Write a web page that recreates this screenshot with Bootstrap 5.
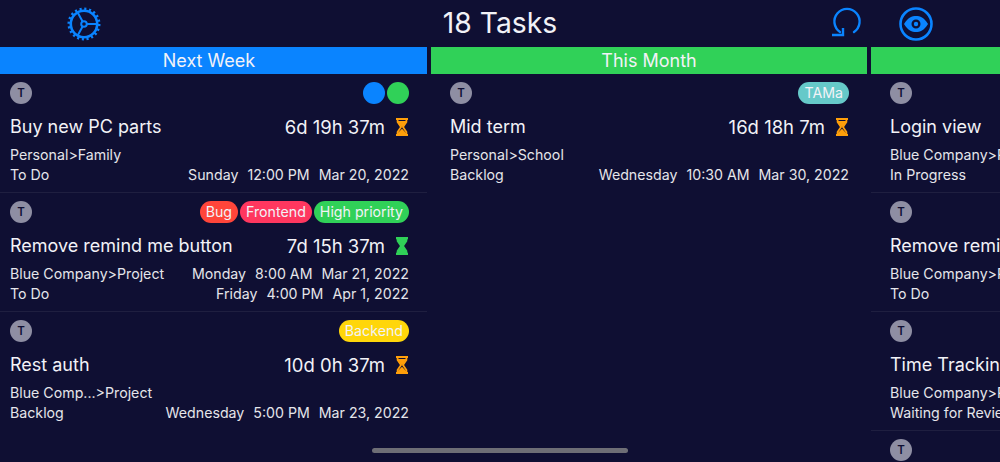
<!DOCTYPE html>
<html lang="en">
<head>
    <meta charset="UTF-8">
    <meta name="viewport" content="width=device-width, initial-scale=1.0">
    <title>18 Tasks</title>
    <link href="https://cdn.jsdelivr.net/npm/bootstrap@5.3.0/dist/css/bootstrap.min.css" rel="stylesheet">
    <style>
        html, body {
            height: 100%;
            overflow: hidden;
        }
        body {
            background-color: #0f0f33;
            color: #f2f2f7;
            font-family: Inter, "Noto Sans", sans-serif;
        }
        .top-bar {
            height: 47px;
        }
        .top-title {
            font-size: 28.3px;
            line-height: 47px;
            left: 0;
            right: 0;
            top: 0;
        }
        .gear-slot {
            margin-left: 67px;
            width: 34px;
        }
        .undo-slot {
            margin-left: auto;
            margin-right: 37px;
            width: 32px;
        }
        .eye-slot {
            margin-right: 67px;
            width: 34px;
        }
        .board {
            margin-left: -9px;
            width: 1400px;
            gap: 4px;
        }
        .task-col {
            width: 436px;
            flex: none;
        }
        .col-head {
            height: 27px;
            line-height: 27px;
            font-size: 18px;
            text-align: center;
            color: #f2f2f7;
        }
        .head-blue { background-color: #0a84ff; }
        .head-green { background-color: #30d158; }
        .task-item {
            height: 119px;
            padding: 8px 18px 0 19px;
            border-bottom: 1px solid #1f1f40;
            white-space: nowrap;
        }
        .task-item:last-child { border-bottom: 0; }
        .avatar-t {
            width: 22px;
            height: 22px;
            border-radius: 50%;
            background-color: #8e8ea3;
            color: #0f0f33;
            font-size: 11.5px;
            font-weight: 600;
            line-height: 22px;
            text-align: center;
        }
        .tag-row { height: 22px; gap: 2px; }
        .tag-pill {
            height: 22px;
            line-height: 22px;
            border-radius: 11px;
            padding: 0 6px;
            font-size: 14.2px;
            color: #f2f2f7;
        }
        .tag-dot {
            width: 22px;
            height: 22px;
            border-radius: 50%;
        }
        .tag-blue { background-color: #0a84ff; }
        .tag-green { background-color: #30d158; }
        .tag-red { background-color: #ff453a; }
        .tag-pink { background-color: #ff375f; }
        .tag-yellow { background-color: #ffd60a; }
        .tag-teal { background-color: #66c9c9; }
        .title-row {
            margin-top: 10px;
            height: 26px;
            line-height: 26px;
            font-size: 18px;
        }
        .timer-text { font-size: 18.5px; }
        .timer-icon { margin-left: 10px; display: block; }
        .meta-row {
            font-size: 14.2px;
            line-height: 20px;
            color: #e5e5ea;
        }
        .title-row + .meta-row { margin-top: 5px; }
        .meta-when span { margin-left: 9px; }
        .home-bar {
            left: 372px;
            bottom: 9px;
            width: 256px;
            height: 5px;
            border-radius: 3px;
            background-color: #6e6e76;
        }
    </style>
</head>
<body class="position-relative">
    <header class="top-bar d-flex align-items-center position-relative">
        <div class="top-title position-absolute text-center">18 Tasks</div>
        <div class="gear-slot">
            <svg width="34" height="34" viewBox="0 0 34 34" fill="none" stroke="#0a84ff" class="d-block">
                <circle cx="17" cy="17" r="13.2" stroke-width="2.6"/>
                <circle cx="17" cy="17" r="15" stroke-width="3" stroke-dasharray="2.1 2.6"/>
                <circle cx="17" cy="17" r="2.8" stroke-width="2"/>
                <path d="M15.6 14.6 L10.8 5.8 M19.8 17 H29.5 M15.6 19.4 L10.8 28.2" stroke-width="2"/>
            </svg>
        </div>
        <div class="undo-slot">
            <svg width="32" height="34" viewBox="0 0 32 34" fill="none" stroke="#0a84ff" stroke-width="2.4" class="d-block">
                <path d="M10 25 A12.6 12.6 0 1 1 24 25" stroke-linecap="round"/>
                <path d="M2 28 H13 V21"/>
            </svg>
        </div>
        <div class="eye-slot">
            <svg width="34" height="34" viewBox="0 0 34 34" fill="none" class="d-block">
                <circle cx="17" cy="17" r="15.5" stroke="#0a84ff" stroke-width="2.6"/>
                <path fill-rule="evenodd" fill="#0a84ff" d="M5 17 C9 10.5 13 9 17 9 C21 9 25 10.5 29 17 C25 23.5 21 25 17 25 C13 25 9 23.5 5 17 Z M17 12.5 A4.5 4.5 0 1 0 17 21.5 A4.5 4.5 0 1 0 17 12.5 Z"/>
                <circle cx="17" cy="17" r="2.2" fill="#0a84ff"/>
            </svg>
        </div>
    </header>

    <main class="board d-flex" id="board"></main>

    <div class="home-bar position-absolute"></div>

    <script>
        const cols = [
            { name: 'Next Week', head: 'head-blue', tasks: [
                { tags: [['', 'tag-blue'], ['', 'tag-green']], title: 'Buy new PC parts', left: '6d 19h 37m', glass: 'o',
                  meta: [['Personal>Family', ''], ['To Do', ['Sunday', '12:00 PM', 'Mar 20, 2022']]] },
                { tags: [['Bug', 'tag-red'], ['Frontend', 'tag-pink'], ['High priority', 'tag-green']], title: 'Remove remind me button', left: '7d 15h 37m', glass: 'g',
                  meta: [['Blue Company>Project', ['Monday', '8:00 AM', 'Mar 21, 2022']], ['To Do', ['Friday', '4:00 PM', 'Apr 1, 2022']]] },
                { tags: [['Backend', 'tag-yellow']], title: 'Rest auth', left: '10d 0h 37m', glass: 'o',
                  meta: [['Blue Comp...>Project', ''], ['Backlog', ['Wednesday', '5:00 PM', 'Mar 23, 2022']]] }
            ]},
            { name: 'This Month', head: 'head-green', tasks: [
                { tags: [['TAMa', 'tag-teal']], title: 'Mid term', left: '16d 18h 7m', glass: 'o',
                  meta: [['Personal>School', ''], ['Backlog', ['Wednesday', '10:30 AM', 'Mar 30, 2022']]] }
            ]},
            { name: '', head: 'head-green', tasks: [
                { tags: [], title: 'Login view', meta: [['Blue Company>Project', ''], ['In Progress', '']] },
                { tags: [], title: 'Remove remind me button', meta: [['Blue Company>Project', ''], ['To Do', '']] },
                { tags: [], title: 'Time Tracking', meta: [['Blue Company>Project', ''], ['Waiting for Review', '']] },
                { tags: [], title: '', meta: [] }
            ]}
        ];

        function glassSvg(kind) {
            const c = kind === 'g' ? '#30d158' : '#ff9f0a';
            const sand = kind === 'g'
                ? '<path d="M3 3 H11 L7 9 L11 15 H3 L7 9 Z" fill="' + c + '"/>'
                : '<path d="M4 4 H10 L7 8 Z M3.6 15.5 L7 12 L10.4 15.5 Z" fill="' + c + '"/>';
            return '<svg class="timer-icon" width="14" height="18" viewBox="0 0 14 18" fill="none" stroke="' + c + '" stroke-width="1.8">' +
                '<path d="M1 1 H13 M1 17 H13" stroke-width="2"/>' +
                '<path d="M2.6 1 V4 L6 9 L2.6 14 V17 M11.4 1 V4 L8 9 L11.4 14 V17"/>' + sand + '</svg>';
        }

        function tagHtml(t) {
            if (!t[0]) return '<div class="tag-dot ' + t[1] + '"></div>';
            return '<div class="tag-pill ' + t[1] + '">' + t[0] + '</div>';
        }

        function metaHtml(m) {
            const when = m[1] ? '<div class="meta-when">' + m[1].map(s => '<span>' + s + '</span>').join('') + '</div>' : '';
            return '<div class="meta-row d-flex justify-content-between"><div>' + m[0].replace('>', '&gt;') + '</div>' + when + '</div>';
        }

        function taskHtml(t) {
            const right = t.left ? '<div class="d-flex align-items-center"><span class="timer-text">' + t.left + '</span>' + glassSvg(t.glass) + '</div>' : '';
            return '<div class="task-item">' +
                '<div class="tag-row d-flex justify-content-between"><div class="avatar-t">T</div><div class="d-flex tag-row">' +
                t.tags.map(tagHtml).join('') + '</div></div>' +
                '<div class="title-row d-flex justify-content-between"><div>' + t.title + '</div>' + right + '</div>' +
                t.meta.map(metaHtml).join('') + '</div>';
        }

        document.getElementById('board').innerHTML = cols.map(c =>
            '<section class="task-col"><div class="col-head ' + c.head + '">' + c.name + '</div>' +
            c.tasks.map(taskHtml).join('') + '</section>').join('');
    </script>
    <script src="https://cdn.jsdelivr.net/npm/bootstrap@5.3.0/dist/js/bootstrap.bundle.min.js"></script>
</body>
</html>
